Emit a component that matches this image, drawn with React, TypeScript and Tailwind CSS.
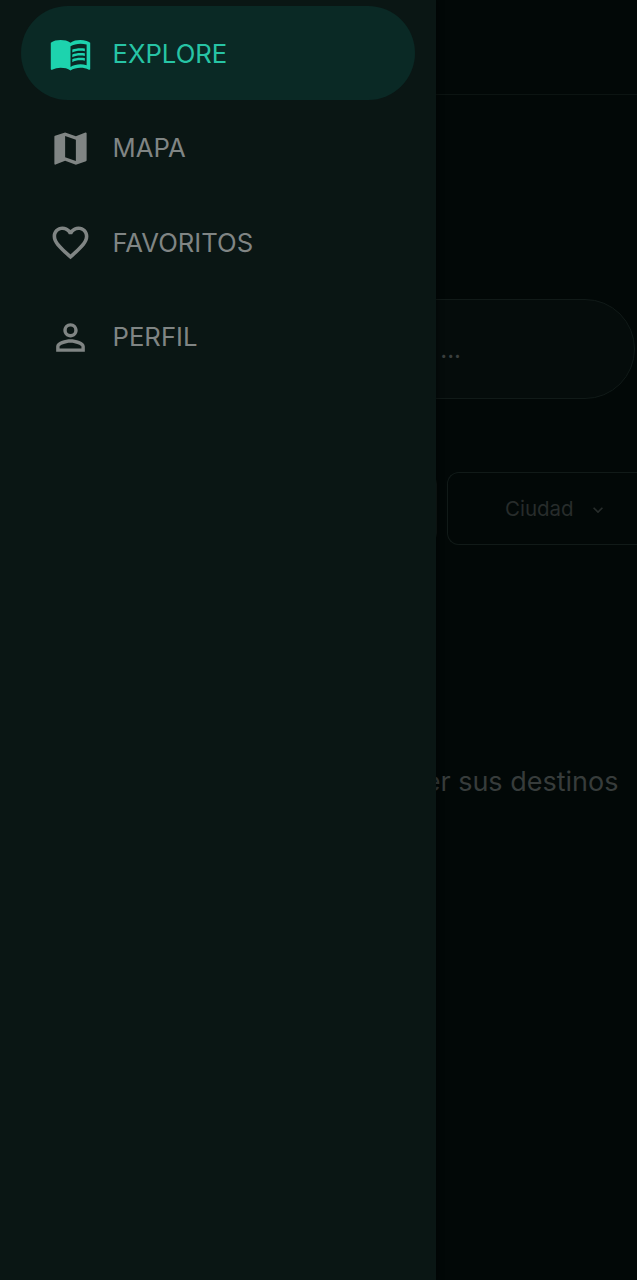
import { IconType } from 'react-icons';
import { MdFavoriteBorder, MdMap, MdMenuBook, MdOutlineExpandMore, MdPersonOutline } from 'react-icons/md';

interface NavItem {
  label: string;
  icon: IconType;
  active?: boolean;
}

const items: NavItem[] = [
  { label: 'EXPLORE', icon: MdMenuBook, active: true },
  { label: 'MAPA', icon: MdMap },
  { label: 'FAVORITOS', icon: MdFavoriteBorder },
  { label: 'PERFIL', icon: MdPersonOutline },
];

const Backdrop = () => (
  <div className="h-[1280px] overflow-hidden bg-[#020807]">
    <div className="h-[95px] border-b border-[#0c1412]" />
    <div className="mt-[204px] ml-[-40px] flex h-[100px] w-[675px] items-center justify-between rounded-full border border-[#111a18] bg-[#050c0b]">
      <span className="ml-[300px] mt-[1px] w-[200px] whitespace-nowrap text-right text-[24px] text-[#3a3f3e]">Buscar ...</span>
    </div>
    <div className="mt-[73px] flex justify-end gap-[10px]">
      <div className="h-[73px] w-[200px] shrink-0 rounded-xl border border-[#111a18]" />
      <div className="flex h-[73px] w-[190px] shrink-0 items-center rounded-l-xl border border-r-0 border-[#111a18] pt-[2px] pl-[57px]">
        <span className="text-[20.5px] text-[#272c2b]">Ciudad</span>
        <MdOutlineExpandMore className="ml-[14px] text-[#272c2b]" size={20} />
      </div>
    </div>
    <div className="mt-[217px] flex justify-end pr-[18.5px]">
      <span className="whitespace-nowrap text-[27px] text-[#373c3b]">Selecciona una ciudad para ver sus destinos</span>
    </div>
  </div>
);

const App = () => {
  return (
    <div className="relative h-[1280px] w-[637px] overflow-hidden font-['Inter',sans-serif]">
      <Backdrop />
      <nav className="absolute inset-y-0 left-0 flex w-[436px] flex-col gap-[0.5px] bg-[#0a1614] pt-[5.5px] pr-[21px] pl-[21px] shadow-[2px_0_6px_rgba(0,0,0,0.4)]">
        {items.map((item) => (
          <div
            key={item.label}
            className={`flex h-[94px] items-center gap-[20px] rounded-full pt-[2px] pl-[28px] ${item.active ? 'bg-[#0a2925] text-[#1dd3ae]' : 'text-[#808584]'}`}
          >
            <item.icon size={43} className="shrink-0" />
            <span className={`pl-[0.5px] text-[25.7px] leading-none ${item.active ? 'text-[#27c4a5]' : ''}`}>{item.label}</span>
          </div>
        ))}
      </nav>
    </div>
  );
};

export default App;
